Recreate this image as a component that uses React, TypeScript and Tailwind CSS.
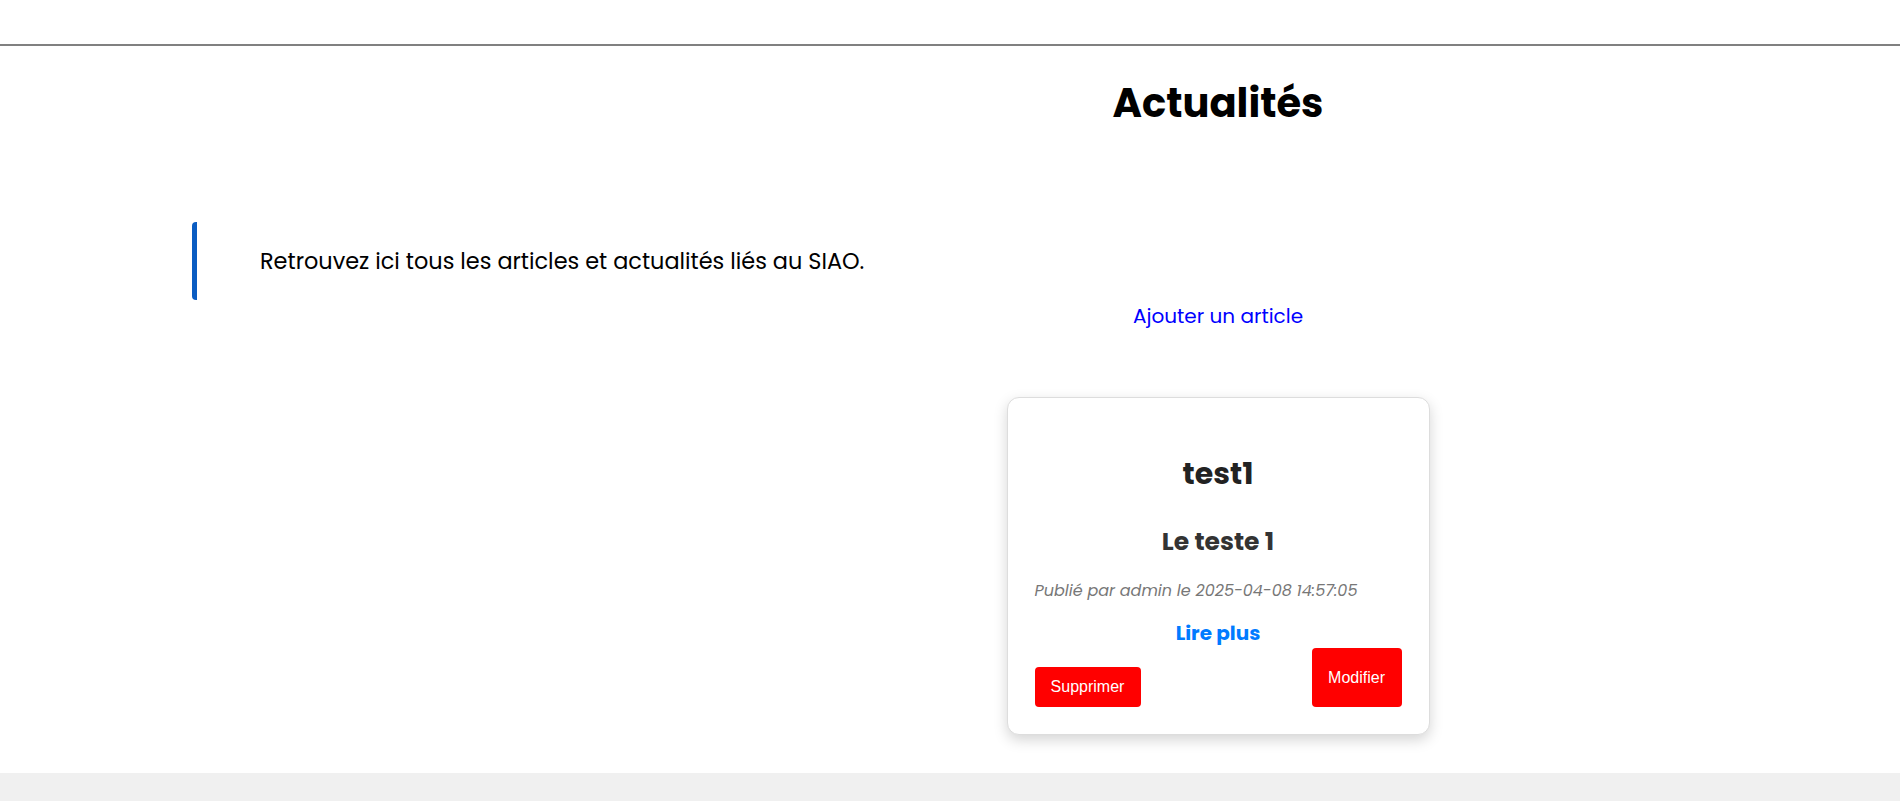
import React from "react";

const poppins = { fontFamily: "'Poppins', 'Open Sans', 'Noto Sans', sans-serif" };

export default function App() {
  return (
    <div className="min-h-[801px] flex flex-col bg-white" style={poppins}>
      <header className="h-[46px] border-b-2 border-[#808080] bg-white" />
      <main className="flex flex-col">
        <div className="pl-[536px] flex justify-center mt-[33px]">
          <h1 className="text-[40px] leading-[48px] font-bold text-black">Actualités</h1>
        </div>
        <blockquote className="ml-[192px] mt-[95px] w-[690px] border-l-[5px] border-[#0a5cc2] rounded-l-[4px] py-[24px] pl-[63px] text-[22.4px] leading-[30px] text-black">
          Retrouvez ici tous les articles et actualités liés au SIAO.
        </blockquote>
        <div className="pl-[536px] flex justify-center mt-[1px]">
          <a href="#" className="text-[20px] leading-[30px] text-[#0000ff]">Ajouter un article</a>
        </div>
        <div className="pl-[536px] flex justify-center mt-[66px] mb-[38px]">
          <div className="w-[423px] h-[338px] border border-[#dddddd] rounded-[12px] bg-white shadow-[0_5px_14px_rgba(0,0,0,0.17)] px-[27px] pt-[56px] flex flex-col">
            <h2 className="text-[30px] leading-[40px] font-bold text-[#222222] text-center">test1</h2>
            <h3 className="mt-[32px] text-[25px] leading-[32px] font-bold text-[#333333] text-center">Le teste 1</h3>
            <p className="mt-[21px] text-[16px] leading-[24px] italic text-[#777777]">
              Publié par admin le 2025-04-08 14:57:05
            </p>
            <a href="#" className="mt-[17px] text-[20px] leading-[27px] font-bold text-[#007bff] text-center">Lire plus</a>
            <div className="mt-[1px] flex justify-between items-end" style={{ fontFamily: "'Liberation Sans', Arial, sans-serif" }}>
              <button className="w-[106px] h-[40px] bg-[#ff0000] text-white text-[16px] rounded-[4px]">Supprimer</button>
              <button className="w-[90px] h-[59px] bg-[#ff0000] text-white text-[16px] rounded-[4px]">Modifier</button>
            </div>
          </div>
        </div>
      </main>
      <footer className="flex-1 bg-[#f0f0f0]" />
    </div>
  );
}
